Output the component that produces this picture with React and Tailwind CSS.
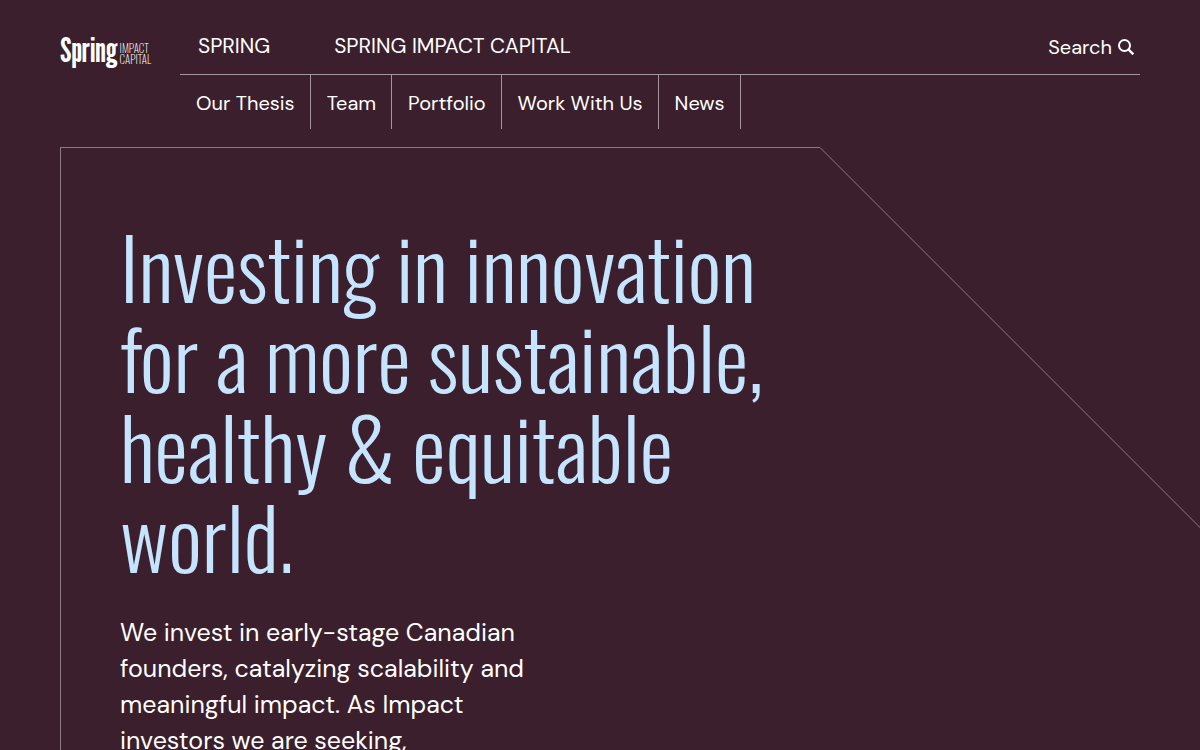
const sections = ['Our Thesis', 'Team', 'Portfolio', 'Work With Us', 'News']

function Logo() {
  return (
    <a href="#" className="flex w-[90px] shrink-0 items-start gap-[2px] pt-[31px]">
      <span className="font-['League_Gothic','Oswald',sans-serif] text-[34px] leading-[38px]">Spring</span>
      <span className="pt-[12px] font-['Oswald','Liberation_Sans_Narrow',sans-serif] text-[11px] leading-[11px] font-extralight">
        IMPACT
        <br />
        CAPITAL
      </span>
    </a>
  )
}

function SearchIcon() {
  return (
    <svg width="16" height="16" viewBox="0 0 16 16" fill="none" stroke="currentColor" strokeWidth="2" aria-hidden="true">
      <circle cx="6.5" cy="6.5" r="5.5" />
      <path d="M10.5 10.5L15.3 15.3" strokeWidth="2.4" />
    </svg>
  )
}

function Header() {
  return (
    <header className="flex gap-[30px] px-[60px]">
      <Logo />
      <div className="grow">
        <div className="flex h-[75px] items-center border-b border-[#a5959d] pt-[19px] pl-[18px]">
          <nav aria-label="Sites" className="flex gap-[64px] text-[21px]">
            <a href="#">SPRING</a>
            <a href="#">SPRING IMPACT CAPITAL</a>
          </nav>
          <button type="button" className="mr-[6px] ml-auto flex items-center gap-[6px] text-[20px]">
            Search
            <SearchIcon />
          </button>
        </div>
        <nav aria-label="Main" className="flex text-[20px]">
          {sections.map((label) => (
            <a key={label} href="#" className="flex h-[54px] items-center border-r border-[#a5959d] pt-[2px] pr-[15px] pl-[16px]">
              {label}
            </a>
          ))}
        </nav>
      </div>
    </header>
  )
}

// top edge of the panel with its cut-off corner
function PanelEdge() {
  return (
    <svg className="absolute top-0 left-0 h-full w-full" fill="none" stroke="#8c7a84" aria-hidden="true">
      <path d="M0 .5H759L1759 1000.5" />
    </svg>
  )
}

export default function App() {
  return (
    <div className="min-h-screen overflow-hidden bg-[#3b1f2c] font-['DM_Sans','Inter',sans-serif] text-white">
      <Header />
      <main className="relative mt-[18px] ml-[60px] border-l border-[#8c7a84] pt-[73px] pb-[60px] pl-[59px]">
        <PanelEdge />
        <h1 className="max-w-[660px] font-['Oswald','Liberation_Sans_Narrow',sans-serif] text-[84px] leading-[90px] font-light text-[#c4e4ff]">
          Investing in innovation for a more sustainable, healthy &amp; equitable world.
        </h1>
        <p className="mt-[35px] max-w-[420px] text-[25px] leading-[36px]">
          We invest in early-stage Canadian founders, catalyzing scalability and meaningful impact. As Impact investors we are seeking,
        </p>
      </main>
    </div>
  )
}
